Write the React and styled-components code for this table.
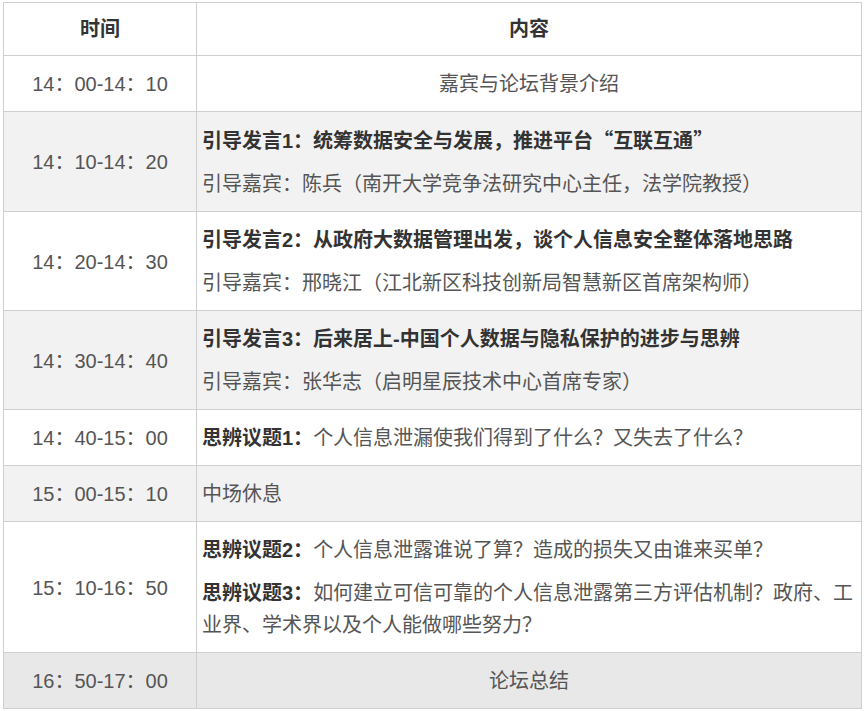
import React from "react";
import styled, { createGlobalStyle } from "styled-components";

const Global = createGlobalStyle`
  html, body { margin: 0; padding: 0; background: #fff; }
  body { font-family: "Liberation Sans", "Noto Sans CJK SC", Arial, sans-serif; }
`;

const Page = styled.div`
  padding: 2px 3px;
`;

const Table = styled.table`
  width: 859px;
  border-collapse: collapse;
  table-layout: fixed;
  font-size: 20px;
  color: #555;
`;

const HeadCell = styled.th`
  border: 1px solid #cfcfcf;
  padding: 11px 5px;
  line-height: 30px;
  font-weight: bold;
  color: #333;
  text-align: center;
  width: ${(p) => p.$w || "auto"};
`;

const Row = styled.tr`
  background: ${(p) =>
    p.$tone === "dark" ? "#e8e8e8" : p.$tone === "gray" ? "#f2f2f2" : "#fff"};
`;

const TimeCell = styled.td`
  border: 1px solid #cfcfcf;
  padding: 12px 5px 11px;
  line-height: 32px;
  text-align: center;
  vertical-align: middle;
  white-space: nowrap;
`;

const ContentCell = styled.td`
  border: 1px solid #cfcfcf;
  padding: 12px 5px 11px;
  line-height: 32px;
  text-align: ${(p) => (p.$center ? "center" : "left")};
  vertical-align: middle;
`;

const Para = styled.p`
  margin: 0;
  & + & { margin-top: 11px; }
`;

const Strong = styled.b`
  font-weight: bold;
  color: #333;
`;

const Quote = styled.span`
  font-family: "Noto Sans CJK SC", sans-serif;
`;

const rows = [
  { time: "14：00-14：10", center: true, paras: [{ t: "嘉宾与论坛背景介绍" }] },
  {
    time: "14：10-14：20",
    tone: "gray",
    paras: [
      {
        b: (
          <>
            引导发言1：统筹数据安全与发展，推进平台<Quote lang="zh-CN">“</Quote>互联互通<Quote lang="zh-CN">”</Quote>
          </>
        ),
      },
      { t: "引导嘉宾：陈兵（南开大学竞争法研究中心主任，法学院教授）" },
    ],
  },
  {
    time: "14：20-14：30",
    paras: [
      { b: "引导发言2：从政府大数据管理出发，谈个人信息安全整体落地思路" },
      { t: "引导嘉宾：邢晓江（江北新区科技创新局智慧新区首席架构师）" },
    ],
  },
  {
    time: "14：30-14：40",
    tone: "gray",
    paras: [
      { b: "引导发言3：后来居上-中国个人数据与隐私保护的进步与思辨" },
      { t: "引导嘉宾：张华志（启明星辰技术中心首席专家）" },
    ],
  },
  {
    time: "14：40-15：00",
    paras: [{ b: "思辨议题1：", t: "个人信息泄漏使我们得到了什么？又失去了什么？" }],
  },
  { time: "15：00-15：10", tone: "gray", paras: [{ t: "中场休息" }] },
  {
    time: "15：10-16：50",
    paras: [
      { b: "思辨议题2：", t: "个人信息泄露谁说了算？造成的损失又由谁来买单？" },
      {
        b: "思辨议题3：",
        t: "如何建立可信可靠的个人信息泄露第三方评估机制？政府、工业界、学术界以及个人能做哪些努力？",
      },
    ],
  },
  { time: "16：50-17：00", tone: "dark", center: true, paras: [{ t: "论坛总结" }] },
];

export default function App() {
  return (
    <Page lang="zh-CN">
      <Global />
      <Table>
        <thead>
          <tr>
            <HeadCell $w="182px">时间</HeadCell>
            <HeadCell>内容</HeadCell>
          </tr>
        </thead>
        <tbody>
          {rows.map((r, i) => (
            <Row key={i} $tone={r.tone}>
              <TimeCell>{r.time}</TimeCell>
              <ContentCell $center={r.center}>
                {r.paras.map((p, j) => (
                  <Para key={j}>
                    {p.b && <Strong>{p.b}</Strong>}
                    {p.t}
                  </Para>
                ))}
              </ContentCell>
            </Row>
          ))}
        </tbody>
      </Table>
    </Page>
  );
}
